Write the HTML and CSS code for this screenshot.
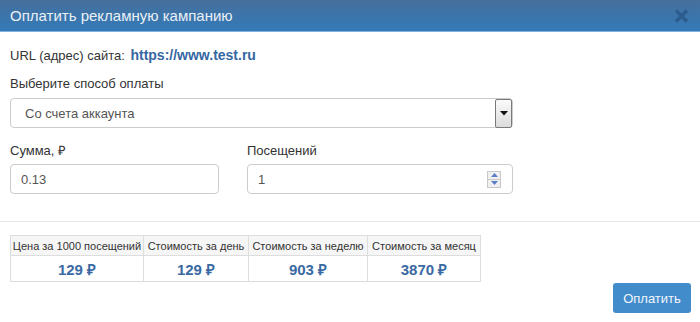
FILE: index.html
```html
<!DOCTYPE html>
<html lang="ru">
<head>
  <meta charset="UTF-8">
  <title>Оплатить рекламную кампанию</title>
  <link rel="stylesheet" href="styles.css">
</head>
<body>

  <div class="modal">
    <div class="modal-header">
      <span class="modal-title">Оплатить рекламную кампанию</span>
      <svg class="close" width="17" height="16" viewBox="0 0 17 16">
        <path d="M3 2.5 L14 13.5 M14 2.5 L3 13.5" stroke="#2d5d8e" stroke-width="3.6" stroke-linecap="butt"/>
      </svg>
    </div>

    <div class="modal-body">
      <p class="site-line">URL (адрес) сайта: <a class="site-link">https://www.test.ru</a></p>

      <label class="field-label">Выберите способ оплаты</label>
      <div class="control select-control">
        <span class="control-text">Со счета аккаунта</span>
        <span class="select-btn">
          <svg width="8" height="5" viewBox="0 0 8 5"><path d="M0 0 H8 L4 4.5 Z" fill="#111"/></svg>
        </span>
      </div>

      <div class="row">
        <div class="col col-sum">
          <label class="field-label">Сумма, ₽</label>
          <div class="control">
            <span class="control-text">0.13</span>
          </div>
        </div>
        <div class="col col-visits">
          <label class="field-label">Посещений</label>
          <div class="control">
            <span class="control-text">1</span>
            <span class="spinner">
              <span class="spin-btn"><svg width="7" height="4" viewBox="0 0 7 4"><path d="M0 4 H7 L3.5 0 Z" fill="#5a7fc4"/></svg></span>
              <span class="spin-btn"><svg width="7" height="4" viewBox="0 0 7 4"><path d="M0 0 H7 L3.5 4 Z" fill="#5a7fc4"/></svg></span>
            </span>
          </div>
        </div>
      </div>
    </div>

    <hr class="divider">

    <table class="prices">
      <colgroup>
        <col class="c1"><col class="c2"><col class="c3"><col class="c4">
      </colgroup>
      <tr>
        <th>Цена за 1000 посещений</th>
        <th>Стоимость за день</th>
        <th>Стоимость за неделю</th>
        <th>Стоимость за месяц</th>
      </tr>
      <tr>
        <td>129 ₽</td>
        <td>129 ₽</td>
        <td>903 ₽</td>
        <td>3870 ₽</td>
      </tr>
    </table>

    <div class="modal-footer">
      <button class="btn-primary">Оплатить</button>
    </div>
  </div>

</body>
</html>
```

FILE: styles.css
```css
body {
  margin: 0;
  font-family: "Liberation Sans", Arial, sans-serif;
  font-size: 13px;
  color: #333;
  background: #fff;
}
.modal-header {
  height: 31px;
  display: flex;
  align-items: center;
  justify-content: space-between;
  padding: 0 10px 0 10px;
  background: linear-gradient(#466f9c, #337ab8);
  border-bottom: 1px solid #7db0e0;
}
.modal-title {
  color: #eaf0f6;
  font-size: 15px;
}
.modal-body {
  padding: 14px 10px 0 10px;
}
.site-line {
  margin: 0;
  line-height: 18px;
}
.site-link {
  color: #3567a3;
  font-weight: bold;
  font-size: 14px;
  margin-left: 2px;
}
.field-label {
  display: block;
  line-height: 18px;
  margin-top: 10px;
  margin-bottom: 5px;
}
.control {
  height: 28px;
  border: 1px solid #ccc;
  border-radius: 4px;
  display: flex;
  align-items: center;
  color: #555;
  box-sizing: content-box;
}
.control-text {
  padding-left: 10px;
}
.select-control {
  width: 501px;
}
.select-control .control-text {
  padding-left: 14px;
}
.select-btn {
  margin-left: auto;
  width: 15px;
  height: 27px;
  border: 1px solid #7a7a7a;
  border-radius: 2px;
  background: linear-gradient(#fafafa, #dcdcdc);
  display: flex;
  align-items: center;
  justify-content: center;
}
.row {
  display: flex;
  gap: 28px;
}
.row .field-label {
  margin-top: 14px;
  margin-bottom: 4px;
}
.col-sum .control {
  width: 207px;
}
.col-visits .control {
  width: 264px;
}
.spinner {
  margin-left: auto;
  margin-right: 11px;
  display: flex;
  flex-direction: column;
}
.spin-btn {
  width: 12px;
  height: 7px;
  border: 1px solid #c8c8c8;
  background: #f0f0f0;
  display: flex;
  align-items: center;
  justify-content: center;
}
.spin-btn + .spin-btn {
  border-top: none;
}
.divider {
  border: none;
  border-top: 1px solid #e5e5e5;
  margin: 27px 0 13px 0;
}
.prices {
  margin-left: 10px;
  border-collapse: collapse;
  table-layout: fixed;
  width: 470px;
}
.c1 { width: 133px; }
.c2 { width: 105px; }
.c3 { width: 119px; }
.c4 { width: 113px; }
.prices th {
  font-weight: normal;
  font-size: 11px;
  height: 19px;
  padding: 0;
  white-space: nowrap;
  background: #f6f6f6;
  border: 1px solid #ddd;
  color: #333;
}
.prices td {
  height: 23px;
  border: 1px solid #ddd;
  text-align: center;
  font-weight: bold;
  font-size: 15px;
  color: #3b6aa3;
}
.modal-footer {
  display: flex;
  justify-content: flex-end;
  padding-right: 9px;
  margin-top: 1px;
}
.btn-primary {
  width: 78px;
  height: 30px;
  border: none;
  border-radius: 3px;
  background: #438ccc;
  color: #f2f6fb;
  font-family: "Liberation Sans", Arial, sans-serif;
  font-size: 13px;
}
```
